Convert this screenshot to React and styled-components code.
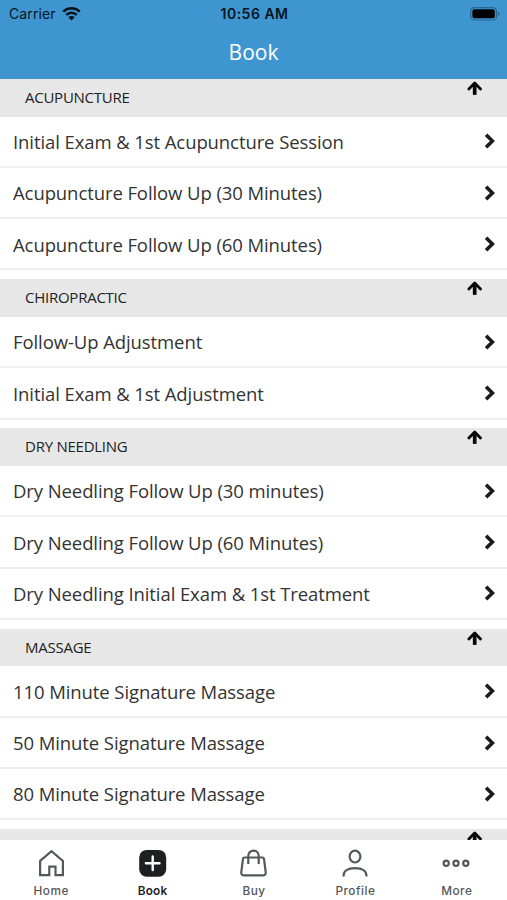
import React from 'react';
import styled, { createGlobalStyle } from 'styled-components';

const GlobalStyle = createGlobalStyle`
  * {
    box-sizing: border-box;
  }

  body {
    margin: 0;
    background: #fff;
    font-family: "Open Sans", "Noto Sans", sans-serif;
  }
`;

const Screen = styled.div`
  display: flex;
  flex-direction: column;
  height: 900px;
  overflow: hidden;
  background: #fff;
`;

const Header = styled.header`
  flex: none;
  height: 79px;
  background: #3e95d0;
`;

const StatusBar = styled.div`
  display: grid;
  grid-template-columns: 1fr auto 1fr;
  align-items: center;
  height: 27px;
  padding: 0 7px 0 9px;
  font-family: Inter, sans-serif;
  font-size: 14px;
  color: #07151f;
`;

const Carrier = styled.div`
  display: flex;
  align-items: center;
  gap: 6px;
  letter-spacing: 0.12px;
`;

const Clock = styled.div`
  font-weight: 600;
  letter-spacing: 0.5px;
`;

const Battery = styled.div`
  display: flex;
  justify-content: flex-end;
`;

const Title = styled.h1`
  margin: 0;
  font-size: 21px;
  font-weight: 400;
  line-height: 50px;
  text-align: center;
  color: #fff;
`;

const List = styled.main`
  flex: 1;
  min-height: 0;
  overflow: hidden;
`;

const Section = styled.section`
  padding-bottom: 8.9px;
`;

const SectionHeader = styled.div`
  display: flex;
  justify-content: space-between;
  height: 37.6px;
  padding: 2px 24px 0 25px;
  background: #e7e7e7;
`;

const SectionTitle = styled.h2`
  margin: 0;
  font-size: 15px;
  font-weight: 400;
  line-height: 33px;
  letter-spacing: -0.25px;
  color: #222;
`;

const Row = styled.div`
  display: flex;
  align-items: center;
  justify-content: space-between;
  height: 51.3px;
  padding: 0.4px 11px 0 13px;
  border-bottom: 2px solid #efefef;
  font-size: 18.5px;
  color: #333;
`;

const RowLabel = styled.span`
  line-height: 25px;
  letter-spacing: -0.09px;
  white-space: nowrap;
`;

const TabBar = styled.nav`
  display: grid;
  flex: none;
  grid-template-columns: repeat(5, 1fr);
  height: 60px;
  padding-top: 8px;
  background: #fff;
`;

const Tab = styled.div`
  display: flex;
  flex-direction: column;
  align-items: center;
  gap: 6px;
  font-family: Inter, sans-serif;
  font-size: 11.8px;
  font-weight: ${(props) => (props.$active ? 600 : 500)};
  line-height: 15px;
  letter-spacing: ${(props) => (props.$active ? 0.2 : 0.5)}px;
  color: ${(props) => (props.$active ? '#1d1f21' : '#55585b')};
`;

const TabLabel = styled.span`
  padding-left: 1px;
`;

const WifiIcon = () => (
	<svg width="19" height="14" viewBox="0 0 19 14" fill="none" stroke="#07151f">
		<path d="M1.2 4.6a12 12 0 0 1 16.6 0" strokeWidth="2.6" />
		<path d="M4.2 7.9a7.6 7.6 0 0 1 10.6 0" strokeWidth="2.5" />
		<path d="M9.5 13.4 6.3 10.3a4.5 4.5 0 0 1 6.4 0z" fill="#07151f" stroke="none" />
	</svg>
);

const BatteryIcon = () => (
	<svg width="30" height="14" viewBox="0 0 30 14">
		<rect x="0.7" y="0.6" width="25.8" height="12.4" rx="3.6" fill="none" stroke="#2a668f" strokeWidth="1.2" />
		<rect x="2.4" y="2.3" width="22.4" height="9" rx="2" fill="#000" />
		<path d="M27.7 4.8q1.7.5 1.7 2.1t-1.7 2.1z" fill="#2a668f" />
	</svg>
);

const ArrowUpIcon = () => (
	<svg width="16" height="15" viewBox="0 0 16 15" fill="none" stroke="#050505">
		<path d="M7.7 13.9V3" strokeWidth="3.7" />
		<path d="M1.9 7.9 7.7 2l5.8 5.9" strokeLinecap="round" strokeLinejoin="round" strokeWidth="2.8" />
	</svg>
);

const ChevronIcon = () => (
	<svg width="12" height="18" viewBox="0 0 12 18" fill="none" stroke="#1b1b1b" strokeWidth="3.6">
		<path d="m2.1 2.7 6.3 6.3-6.3 6.3" />
	</svg>
);

const HomeIcon = () => (
	<svg width="30" height="30" viewBox="0 0 30 30" fill="none" stroke="#55585b" strokeWidth="2.2">
		<path d="M4.1 12.9 15.5 3.1l11.4 9.8v14.3h-7.4v-8.6h-6.2v8.6H4.1z" />
	</svg>
);

const BookIcon = () => (
	<svg width="30" height="30" viewBox="0 0 30 30">
		<rect x="2.2" y="1.9" width="27" height="26.8" rx="7.5" fill="#1d1f21" />
		<path d="M15.7 8.5v13.6M8.9 15.3h13.6" stroke="#fff" strokeWidth="2.4" strokeLinecap="round" />
	</svg>
);

const BuyIcon = () => (
	<svg width="30" height="30" viewBox="0 0 30 30" fill="none" stroke="#55585b" strokeWidth="2.2">
		<path d="M6.6 9.5h17.8q1.4 0 1.6 1.4l1.7 13.3q.3 3.2-2.8 3.2H6.1q-3.1 0-2.8-3.2l1.7-13.3q.2-1.4 1.6-1.4z" />
		<path d="M10.3 16V7.8a5.2 5.2 0 0 1 10.4 0V16" />
	</svg>
);

const ProfileIcon = () => (
	<svg width="30" height="30" viewBox="0 0 30 30" fill="none" stroke="#55585b" strokeWidth="2.2">
		<ellipse cx="15" cy="8.6" rx="5.4" ry="5.9" />
		<path d="M3.6 28.6v-1c0-4.3 4-7.5 11.4-7.5s11.4 3.2 11.4 7.5v1" />
	</svg>
);

const MoreIcon = () => (
	<svg width="30" height="30" viewBox="0 0 30 30" fill="none" stroke="#55585b" strokeWidth="2.2">
		<circle cx="5.2" cy="15.2" r="2.6" />
		<circle cx="15" cy="15.2" r="2.6" />
		<circle cx="24.8" cy="15.2" r="2.6" />
	</svg>
);

const sections = [
	{
		title: 'ACUPUNCTURE',
		items: [
			'Initial Exam & 1st Acupuncture Session',
			'Acupuncture Follow Up (30 Minutes)',
			'Acupuncture Follow Up (60 Minutes)',
		],
	},
	{
		title: 'CHIROPRACTIC',
		items: [
			'Follow-Up Adjustment',
			'Initial Exam & 1st Adjustment',
		],
	},
	{
		title: 'DRY NEEDLING',
		items: [
			'Dry Needling Follow Up (30 minutes)',
			'Dry Needling Follow Up (60 Minutes)',
			'Dry Needling Initial Exam & 1st Treatment',
		],
	},
	{
		title: 'MASSAGE',
		items: [
			'110 Minute Signature Massage',
			'50 Minute Signature Massage',
			'80 Minute Signature Massage',
		],
	},
	{ title: '', items: [] },
];

const tabs = [
	{ label: 'Home', icon: HomeIcon },
	{ label: 'Book', icon: BookIcon, active: true },
	{ label: 'Buy', icon: BuyIcon },
	{ label: 'Profile', icon: ProfileIcon },
	{ label: 'More', icon: MoreIcon },
];

const App = () => {
	return (
		<>
			<GlobalStyle />
			<Screen>
				<Header>
					<StatusBar>
						<Carrier>Carrier <WifiIcon /></Carrier>
						<Clock>10:56 AM</Clock>
						<Battery><BatteryIcon /></Battery>
					</StatusBar>
					<Title>Book</Title>
				</Header>
				<List>
					{sections.map((section, i) => (
						<Section key={i}>
							<SectionHeader>
								<SectionTitle>{section.title}</SectionTitle>
								<ArrowUpIcon />
							</SectionHeader>
							{section.items.map((item) => (
								<Row key={item}>
									<RowLabel>{item}</RowLabel>
									<ChevronIcon />
								</Row>
							))}
						</Section>
					))}
				</List>
				<TabBar>
					{tabs.map(({ label, icon: Icon, active }) => (
						<Tab key={label} $active={active}>
							<Icon />
							<TabLabel>{label}</TabLabel>
						</Tab>
					))}
				</TabBar>
			</Screen>
		</>
	);
};

export default App;
